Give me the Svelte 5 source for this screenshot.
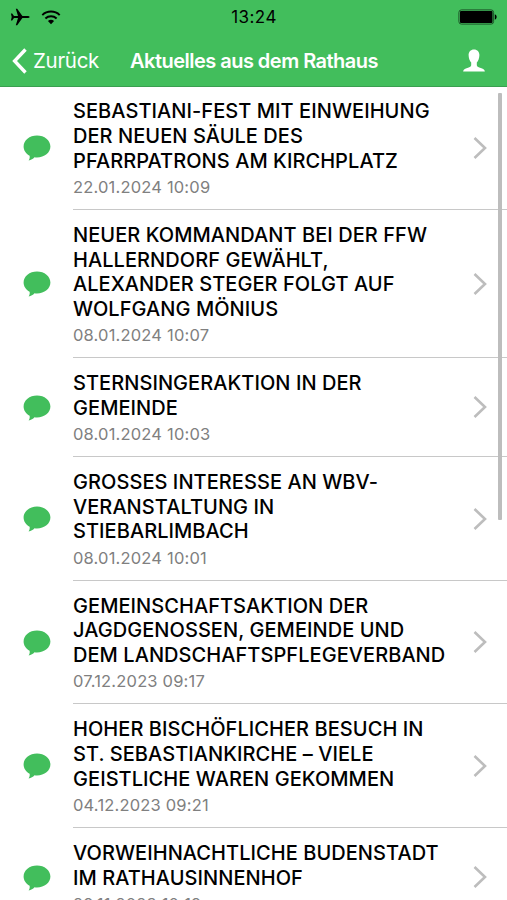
<script lang="ts">
  interface NewsItem {
    lines: string[];
    date: string;
  }

  // Headlines keep their line breaks so every row has a stable height.
  const items: NewsItem[] = [
    {
      lines: ["SEBASTIANI-FEST MIT EINWEIHUNG", "DER NEUEN SÄULE DES", "PFARRPATRONS AM KIRCHPLATZ"],
      date: "22.01.2024 10:09",
    },
    {
      lines: [
        "NEUER KOMMANDANT BEI DER FFW",
        "HALLERNDORF GEWÄHLT,",
        "ALEXANDER STEGER FOLGT AUF",
        "WOLFGANG MÖNIUS",
      ],
      date: "08.01.2024 10:07",
    },
    {
      lines: ["STERNSINGERAKTION IN DER", "GEMEINDE"],
      date: "08.01.2024 10:03",
    },
    {
      lines: ["GROSSES INTERESSE AN WBV-", "VERANSTALTUNG IN", "STIEBARLIMBACH"],
      date: "08.01.2024 10:01",
    },
    {
      lines: ["GEMEINSCHAFTSAKTION DER", "JAGDGENOSSEN, GEMEINDE UND", "DEM LANDSCHAFTSPFLEGEVERBAND"],
      date: "07.12.2023 09:17",
    },
    {
      lines: ["HOHER BISCHÖFLICHER BESUCH IN", "ST. SEBASTIANKIRCHE – VIELE", "GEISTLICHE WAREN GEKOMMEN"],
      date: "04.12.2023 09:21",
    },
    {
      lines: ["VORWEIHNACHTLICHE BUDENSTADT", "IM RATHAUSINNENHOF"],
      date: "29.11.2023 10:19",
    },
  ];
</script>

<div class="screen">
  <header>
    <div class="status">
      <div class="radios">
        <svg class="plane" width="20" height="18" viewBox="0 0 20 18" aria-hidden="true">
          <path d="M19.600 9c0-.7-1-1-2.200-1h-5L7.200.8H5.800l2.200 7.200H4L2.200 5.500H.9L1.700 9l-.8 3.500h1.300L4 10h4l-2.200 7.200h1.400L12.400 10h5c1.200 0 2.200-.3 2.200-1z" />
        </svg>
        <svg class="wifi" width="20" height="15" viewBox="0 0 20 15" aria-hidden="true">
          <path d="M1.300 5.100a12.600 12.600 0 0 1 17.400 0M4.400 8.400a8.200 8.200 0 0 1 11.200 0" />
          <path class="dot" d="M6.900 11a4.700 4.700 0 0 1 6.200 0L10 14.200z" />
        </svg>
      </div>
      <span class="clock">13:24</span>
      <svg class="battery" width="40" height="16" viewBox="0 0 40 16" aria-hidden="true">
        <rect class="shell" x=".9" y=".9" width="34.700" height="14.200" rx="2.500" />
        <rect x="2" y="2" width="32.500" height="12" rx="1" />
        <path d="M36.800 5.300c2.400.6 2.400 4.800 0 5.400z" />
      </svg>
    </div>
    <nav>
      <button class="back">
        <svg width="15" height="26" viewBox="0 0 15 26" aria-hidden="true">
          <path d="M13.500 1.500 2.600 13l10.900 11.500" />
        </svg>
        <span>Zurück</span>
      </button>
      <h1>Aktuelles aus dem Rathaus</h1>
      <button class="profile" aria-label="Profil">
        <svg width="22" height="23" viewBox="0 0 22 23" aria-hidden="true">
          <path d="M11 .4c3.400 0 5.400 2.300 5.400 5.700 0 3.300-1.200 6.100-2.600 7.500v2.500c0 1.300.8 1.900 2.500 2.400 3.200.9 5.300 1.600 5.600 4.100H.1c.3-2.500 2.400-3.200 5.600-4.100 1.700-.5 2.500-1.100 2.500-2.400v-2.500C6.800 12.200 5.600 9.400 5.600 6.100 5.600 2.700 7.600.4 11 .4z" />
        </svg>
      </button>
    </nav>
  </header>

  <ul class="news">
    {#each items as item, i (i)}
      <li>
        <div class="icon">
          <svg width="28" height="26" viewBox="0 0 28 26" aria-hidden="true">
            <path d="M14 .6c7.500 0 13.400 4.900 13.400 11S21.500 22.500 14 22.500c-.9 0-1.700-.1-2.500-.2-1.500 1.700-3.400 2.600-5.900 3.300 1-1.300 1.400-3.200 1-4.800C3 18.800.6 15.600.6 11.600c0-6.100 5.900-11 13.400-11z" />
          </svg>
        </div>
        <div class="body">
          <div class="text">
            <h2>
              {#each item.lines as line, n (n)}
                <span>{line}</span>
              {/each}
            </h2>
            <time>{item.date}</time>
          </div>
          <svg class="chevron" width="14" height="24" viewBox="0 0 14 24" aria-hidden="true">
            <path d="M1.500 2 12 12 1.500 22" />
          </svg>
        </div>
      </li>
    {/each}
  </ul>

  <div class="scrollbar"></div>
</div>

<style>
  :global(body) {
    overflow: hidden;
    background: #fff;
  }

  .screen {
    position: relative;
    height: 900px;
    overflow: hidden;
    background: #fff;
    color: #000;
    font-family: Inter, "Liberation Sans", sans-serif;
  }

  header {
    position: relative;
    z-index: 1;
    box-sizing: border-box;
    height: 87px;
    background: #42be5c;
    border-bottom: 1px solid #3a9f50;
  }

  .status {
    display: grid;
    grid-template-columns: 1fr auto 1fr;
    align-items: center;
    height: 34px;
    padding: 0 9px 0 10px;
  }

  .radios {
    display: flex;
    align-items: center;
    gap: 11px;
  }

  .wifi path {
    fill: none;
    stroke: #000;
    stroke-width: 2;
  }

  .wifi .dot {
    fill: #000;
    stroke: none;
  }

  .clock {
    font-size: 17px;
    letter-spacing: 0.45px;
  }

  .battery {
    justify-self: end;
  }

  .battery .shell {
    fill: none;
    stroke: #1d5429;
    stroke-width: 1;
  }

  nav {
    display: flex;
    align-items: center;
    height: 53px;
    color: #fff;
  }

  button {
    display: flex;
    align-items: center;
    padding: 0;
    border: 0;
    background: none;
    color: inherit;
    font: inherit;
  }

  .back {
    width: 130px;
    padding-left: 12px;
    gap: 6px;
    font-size: 20.5px;
    letter-spacing: -0.3px;
  }

  .back path {
    fill: none;
    stroke: #fff;
    stroke-width: 3.4;
  }

  h1 {
    flex: 1;
    margin: 0;
    font-size: 20px;
    font-weight: 600;
    letter-spacing: -0.52px;
    white-space: nowrap;
  }

  .profile {
    margin-right: 22px;
  }

  .profile path {
    fill: #fff;
  }

  /* The first row starts slightly under the header. */
  .news {
    list-style: none;
    margin: -0.5px 0 0;
    padding: 0;
  }

  li {
    display: flex;
  }

  .icon {
    display: flex;
    align-items: center;
    width: 73px;
    padding-left: 23px;
    box-sizing: border-box;
  }

  .icon path {
    fill: #42be5c;
  }

  .body {
    flex: 1;
    display: flex;
    align-items: center;
    justify-content: space-between;
    padding-right: 20px;
    border-bottom: 1px solid #c8c8c8;
  }

  .text {
    padding: 12.8px 0 11.2px;
  }

  h2 {
    margin: 0;
    font-size: 20px;
    font-weight: 500;
    letter-spacing: 0.06px;
    line-height: 24.7px;
    white-space: nowrap;
  }

  h2 span {
    display: block;
  }

  time {
    display: block;
    padding-top: 2.5px;
    color: #808080;
    font-size: 16.5px;
    letter-spacing: 0.18px;
    line-height: 22px;
  }

  .chevron path {
    fill: none;
    stroke: #bdbdbd;
    stroke-width: 2.6;
  }

  .scrollbar {
    position: absolute;
    z-index: 2;
    top: 93px;
    right: 5px;
    width: 4px;
    height: 427px;
    border-radius: 1px;
    background: #bdbdbd;
  }
</style>
